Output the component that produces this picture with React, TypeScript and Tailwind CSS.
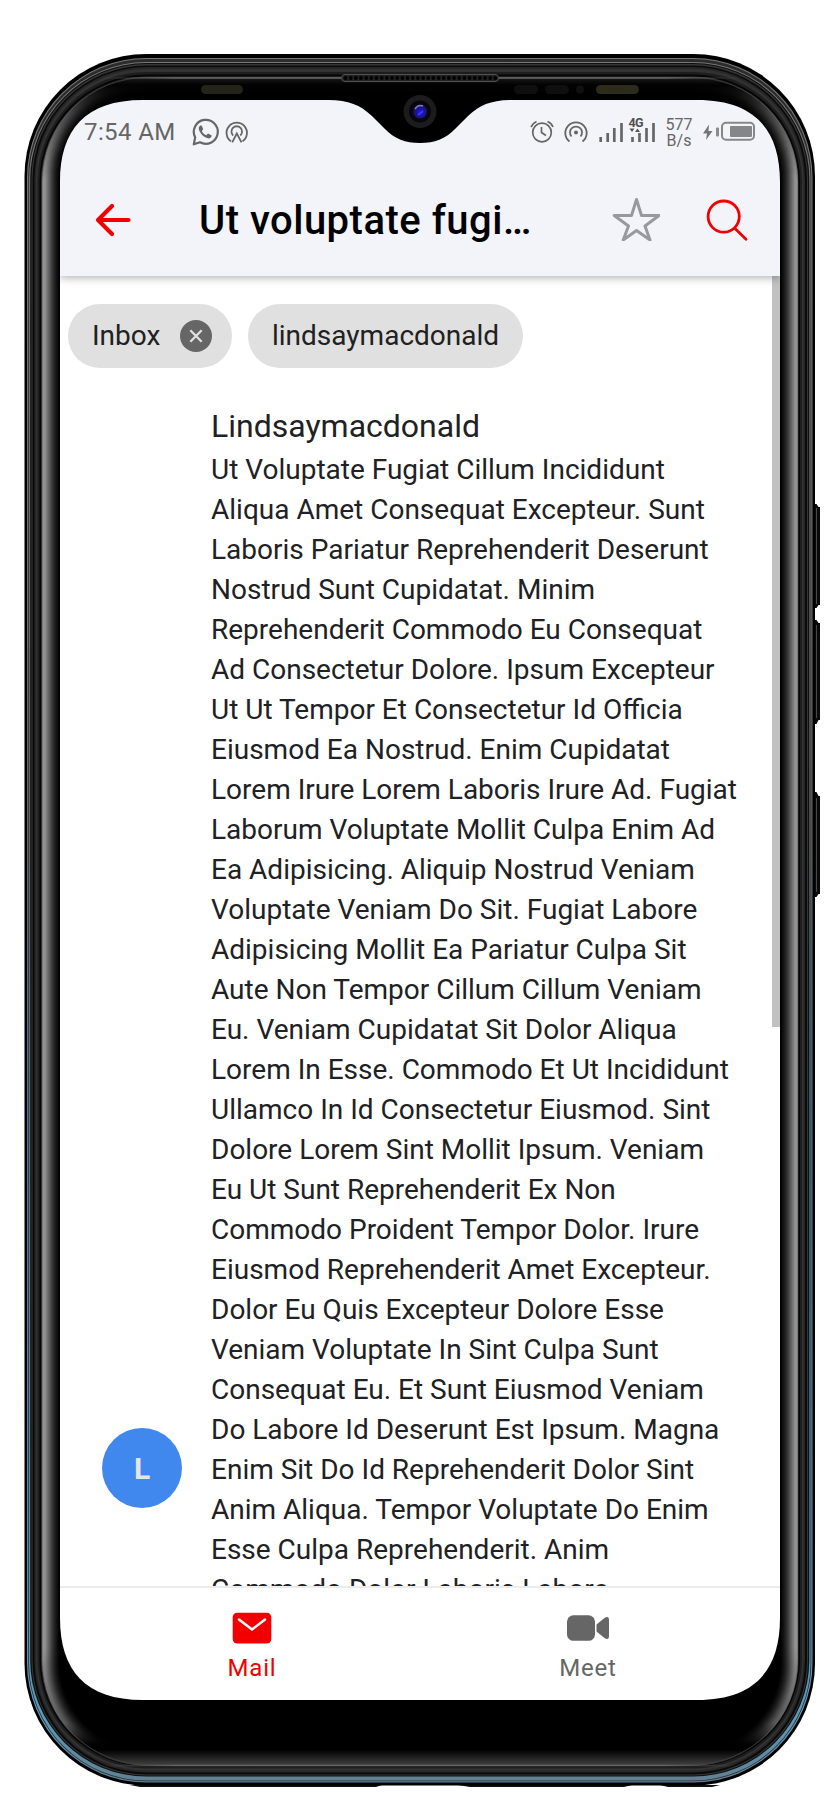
const bodyLines = [
  "Ut Voluptate Fugiat Cillum Incididunt",
  "Aliqua Amet Consequat Excepteur. Sunt",
  "Laboris Pariatur Reprehenderit Deserunt",
  "Nostrud Sunt Cupidatat. Minim",
  "Reprehenderit Commodo Eu Consequat",
  "Ad Consectetur Dolore. Ipsum Excepteur",
  "Ut Ut Tempor Et Consectetur Id Officia",
  "Eiusmod Ea Nostrud. Enim Cupidatat",
  "Lorem Irure Lorem Laboris Irure Ad. Fugiat",
  "Laborum Voluptate Mollit Culpa Enim Ad",
  "Ea Adipisicing. Aliquip Nostrud Veniam",
  "Voluptate Veniam Do Sit. Fugiat Labore",
  "Adipisicing Mollit Ea Pariatur Culpa Sit",
  "Aute Non Tempor Cillum Cillum Veniam",
  "Eu. Veniam Cupidatat Sit Dolor Aliqua",
  "Lorem In Esse. Commodo Et Ut Incididunt",
  "Ullamco In Id Consectetur Eiusmod. Sint",
  "Dolore Lorem Sint Mollit Ipsum. Veniam",
  "Eu Ut Sunt Reprehenderit Ex Non",
  "Commodo Proident Tempor Dolor. Irure",
  "Eiusmod Reprehenderit Amet Excepteur.",
  "Dolor Eu Quis Excepteur Dolore Esse",
  "Veniam Voluptate In Sint Culpa Sunt",
  "Consequat Eu. Et Sunt Eiusmod Veniam",
  "Do Labore Id Deserunt Est Ipsum. Magna",
  "Enim Sit Do Id Reprehenderit Dolor Sint",
  "Anim Aliqua. Tempor Voluptate Do Enim",
  "Esse Culpa Reprehenderit. Anim",
  "Commodo Dolor Laboris Labore",
];

/* Outer metal rims, listed from the outside in: inset on the sides, top and bottom. */
const rims = [
  { s: 0, t: 0, b: 0, c: "#000" },
  { s: 2.5, t: 4, b: 3, c: "url(#rimLine)" },
  { s: 3.700, t: 5, b: 4.300, c: "#2c2c2c" },
  { s: 4.5, t: 8, b: 5, c: "url(#rimLine)" },
  { s: 5.700, t: 9, b: 9, c: "#101010" },
  { s: 7, t: 10, b: 10, c: "#363636" },
  { s: 8, t: 11.5, b: 11, c: "#0a0a0a" },
  { s: 10, t: 13, b: 13, c: "#262626" },
  { s: 11.5, t: 15, b: 15, c: "#323232" },
  { s: 13, t: 18, b: 17, c: "#1e1e1e" },
  { s: 15, t: 20.5, b: 19, c: "#050505" },
  { s: 16.5, t: 22.5, b: 20, c: "#333" },
];

const glow = [
  "#7a7a7a", "#939393", "#929292", "#8a8a8a", "#7e7e7e", "#727272", "#666", "#5a5a5a", "#4d4d4d",
  "#414141", "#363636", "#2b2b2b", "#222", "#1a1a1a", "#131313", "#0c0c0c", "#060606", "#000",
];

const holes = Array.from({ length: 30 }, (_, i) => 345.500 + i * 5.17);

function Frame() {
  return (
    <svg className="pointer-events-none absolute inset-0 z-20" width="840" height="1800" viewBox="0 0 840 1800" fill="none">
      <defs>
        <linearGradient id="rimLine" gradientUnits="userSpaceOnUse" x1="0" y1="54" x2="0" y2="1786">
          <stop offset="0" stopColor="#777" />
          <stop offset="0.45" stopColor="#666" />
          <stop offset="0.62" stopColor="#4f7890" />
          <stop offset="0.96" stopColor="#5c9abb" />
          <stop offset="1" stopColor="#607f90" />
        </linearGradient>
        <linearGradient id="fade" gradientUnits="userSpaceOnUse" x1="0" y1="77" x2="0" y2="1765">
          <stop offset="0.004" stopColor="#000" />
          <stop offset="0.022" stopColor="#777" />
          <stop offset="0.06" stopColor="#fff" />
          <stop offset="0.93" stopColor="#fff" />
          <stop offset="0.975" stopColor="#999" />
          <stop offset="0.988" stopColor="#000" />
        </linearGradient>
        <linearGradient id="glass" gradientUnits="userSpaceOnUse" x1="0" y1="77" x2="0" y2="1765">
          <stop offset="0" stopColor="#1c1c1c" />
          <stop offset="0.005" stopColor="#000" />
          <stop offset="0.991" stopColor="#000" />
          <stop offset="1" stopColor="#404040" />
        </linearGradient>
        <linearGradient id="lip" gradientUnits="userSpaceOnUse" x1="100" y1="0" x2="740" y2="0">
          <stop offset="0" stopColor="#666" stopOpacity="0" />
          <stop offset="0.12" stopColor="#666" />
          <stop offset="0.88" stopColor="#666" />
          <stop offset="1" stopColor="#666" stopOpacity="0" />
        </linearGradient>
        <radialGradient id="lens" cx="0.55" cy="0.55" r="0.6">
          <stop offset="0" stopColor="#2018d8" />
          <stop offset="0.6" stopColor="#1b148e" />
          <stop offset="1" stopColor="#171040" />
        </radialGradient>
        <mask id="glowMask" maskUnits="userSpaceOnUse" x="0" y="0" width="840" height="1800">
          <rect width="840" height="1800" fill="url(#fade)" />
        </mask>
        <mask id="display" maskUnits="userSpaceOnUse" x="0" y="0" width="840" height="1800">
          <rect width="840" height="1800" fill="#fff" />
          <path
            fill="#000"
            d="M60 182C60 130 85 100 143 100H328C349 100 360 105 372 116L385 129C395 139 405 143 420 143C435 143 445 139 455 129L468 116C480 105 491 100 512 100H697C755 100 780 130 780 182V1618C780 1670 755 1700 697 1700H143C85 1700 60 1670 60 1618Z"
          />
        </mask>
      </defs>
      <g mask="url(#display)">
        <path d="M814 504h2.500l2 3h1.500v98h-1.500l-2 3h-2.500zM814 620l2.500 0l2 3h1.500v97h-1.500l-2 4h-2.500zM814 792h2.500l2 4h1.500v98h-1.500l-2 3h-2.500z" fill="#0a0a0a" />
        <path d="M816.500 508v96M816.500 625v93M816.500 798v94" stroke="#4a4a4a" />
        <path d="M130 1785H382L376 1787H140ZM458 1785H632L624 1787H470ZM660 1785H720L712 1787H668Z" fill="#111" />
        {rims.map((r, i) => (
          <rect
            key={i}
            x={24.5 + r.s}
            y={54 + r.t}
            width={790.5 - r.s * 2}
            height={1731.500 - r.t - r.b}
            rx={122 - r.s}
            ry={122 - r.s}
            fill={r.c}
          />
        ))}
        <rect x="42" y="77" width="756" height="1688.500" rx="104" fill="url(#glass)" />
        <rect x="42.500" y="77.500" width="755" height="1687" rx="104" stroke="#3d3d3d" />
        <path d="M100 78H740M100 1765.500H740" stroke="url(#lip)" strokeWidth="1.500" />
        <g mask="url(#glowMask)">
          {glow.map((c, i) => (
            <rect key={i} x={42 + i} y={77 + i * 0.9} width={756 - i * 2} height={1688 - i * 1.8} rx={104 - i} fill={c} />
          ))}
        </g>
        <rect x="341.500" y="74.500" width="157" height="7" rx="3.500" fill="#222" stroke="#505050" />
        {holes.map((x) => (
          <circle key={x} cx={x} cy="78" r="1.900" fill="#000" />
        ))}
        <rect x="201" y="85" width="42" height="9" rx="4.500" fill="#25241a" />
        <rect x="596" y="85" width="43" height="9" rx="4.500" fill="#2c2b1c" />
        <rect x="514" y="85" width="24" height="9" rx="4.500" fill="#0f0f0f" />
        <rect x="545" y="85" width="24" height="9" rx="4.500" fill="#0f0f0f" />
        <circle cx="580" cy="89.500" r="4" fill="#111" />
        <circle cx="420" cy="111.500" r="16.500" fill="#1c1c1f" />
        <circle cx="420" cy="111.500" r="11" fill="#08080a" />
        <circle cx="420" cy="111.500" r="7" fill="url(#lens)" />
        <path d="M415 109q3-5 8-3" stroke="#8177c9" strokeWidth="1.500" />
        <path d="M418 115l5-4" stroke="#3d38ff" strokeWidth="2" />
      </g>
    </svg>
  );
}

function StatusBar() {
  return (
    <div className="flex h-[66px] items-center pl-6 text-[#666]">
      <span className="mb-[2px] w-[106px] text-[24px] tracking-[0.4px] whitespace-nowrap">7:54 AM</span>
      <svg className="mb-[2px]" width="60" height="32" viewBox="190 116 60 32" fill="none" stroke="#666">
        <path d="M193.800 144.300L195.200 137.400A12 12 0 1 1 200 142.300Z" strokeWidth="2.200" strokeLinejoin="round" />
        <path d="M200.500 125.500c-2.200 1-2.200 3.500-.8 6 2 3.600 4.500 5.900 8 6.800 2.200.5 3.800-.7 4-2.800l-3.700-1.900-1.700 1.700c-2.200-.9-3.500-2.300-4.500-4.300l1.400-1.800-1.500-3.700z" fill="#666" stroke="none" />
        <path d="M231 141.300A10.200 10.200 0 1 1 242.500 141.300M233.200 135.500A5.300 5.300 0 1 1 240.300 135.500" strokeWidth="1.800" />
        <path d="M232.200 142.300L236.800 133.500L241.500 142.300" strokeWidth="1.800" />
      </svg>
      <svg className="ml-[276px]" width="136" height="34" viewBox="526 116 136 34" fill="none" stroke="#666">
        <circle cx="542" cy="132.500" r="9.300" strokeWidth="1.700" />
        <path d="M541.500 127v5.500l4.500 3M531 127q2-4 5.500-5.500M547.500 121.500q4 1.500 5.500 5.500" strokeWidth="1.700" />
        <path d="M569.500 141.500A10.700 10.700 0 1 1 582.500 141.500M571.500 136.500A6 6 0 1 1 580.500 136.500" strokeWidth="1.800" />
        <circle cx="576" cy="132.500" r="2" fill="#666" stroke="none" />
        <path d="M600.700 137v5M607.700 133v9M614.300 128v14M621.500 123v19M632.500 137v5M639.500 133v9M646.500 128v14M653.500 123v19" strokeWidth="2.700" />
        <path d="M629.500 128.500h5l-2.500 3.500zM635 132h5l-2.500-3.500z" fill="#555" stroke="none" />
        <text x="628.500" y="127" fill="#4f4f4f" stroke="none" fontFamily="Roboto, sans-serif" fontSize="12.500" fontWeight="700" textLength="15">4G</text>
      </svg>
      <div className="ml-[3px] flex w-[28px] flex-col items-center text-[16px] leading-[16px] whitespace-nowrap">
        <span>577</span>
        <span>B/s</span>
      </div>
      <svg className="mb-[2px] ml-[9px]" width="54" height="24" viewBox="702 120 54 24" fill="none">
        <path d="M709 124.500l-6 9h4l-1 6.500 6.500-9h-4z" fill="#747576" />
        <rect x="716" y="127.500" width="3" height="9" rx="1" fill="#8a8b8d" />
        <rect x="722" y="122.800" width="32" height="17" rx="4" stroke="#85868a" strokeWidth="2" />
        <rect x="730" y="126" width="22" height="11" rx="1" fill="#85868a" />
      </svg>
    </div>
  );
}

function TitleBar() {
  return (
    <div className="flex h-[110px] items-center pl-[34px]">
      <svg className="mb-[2px]" width="38" height="36" viewBox="94 202 38 36" fill="none" stroke="#f20000" strokeWidth="4.200" strokeLinecap="round" strokeLinejoin="round">
        <path d="M128.500 220H98M112 206L98 220L112 234" />
      </svg>
      <h1 className="ml-[67px] w-[413px] text-[40px] leading-[48px] font-medium tracking-[0.5px] whitespace-nowrap text-black">Ut voluptate fugi…</h1>
      <svg className="mb-[4px]" width="48" height="44" viewBox="612 197 48 44" fill="none" stroke="#96999e" strokeWidth="3" strokeLinejoin="round">
        <path d="M636.500 199.500L641.500 215.500L659 215.500L645 226L650 240L636.500 230.500L623.200 240L628.500 226L614.200 215.500L631.500 215.500Z" />
      </svg>
      <svg className="mb-[3px] ml-[45px]" width="44" height="44" viewBox="705 198 44 44" fill="none" stroke="#f20000" strokeWidth="2.800" strokeLinecap="round">
        <circle cx="723.700" cy="216.600" r="15.600" />
        <path d="M735 228.500L746 239.200" />
      </svg>
    </div>
  );
}

export default function App() {
  return (
    <div className="relative h-[1800px] w-[840px] overflow-hidden bg-white px-[60px] pt-[100px] font-[Roboto,sans-serif]">
      <div className="flex h-[1600px] w-[720px] flex-col overflow-hidden rounded-[60px] bg-white">
        <header className="z-10 h-[176px] shrink-0 bg-[#f3f4f9] shadow-[0_2px_8px_rgba(0,0,0,0.3)]">
          <StatusBar />
          <TitleBar />
        </header>

        <main className="flex min-h-0 flex-1 justify-between overflow-hidden">
          <div className="w-[690px]">
            <div className="flex gap-4 pt-7 pl-2 text-[28px] text-[#212121]">
              <div className="flex h-16 w-[164px] items-center justify-between rounded-full bg-[#e0e0e0] pr-5 pl-6">
                <span>Inbox</span>
                <svg width="32" height="32" viewBox="0 0 32 32">
                  <circle cx="16" cy="16" r="16" fill="#666" />
                  <path d="M10.300 10.300L21.700 21.700M21.700 10.300L10.300 21.700" stroke="#e0e0e0" strokeWidth="2.300" />
                </svg>
              </div>
              <div className="flex h-16 w-[275px] items-center rounded-full bg-[#e0e0e0] pl-6">lindsaymacdonald</div>
            </div>
            <div className="flex pt-9 text-[#202124]">
              <div className="mt-[1024px] ml-[42px] flex size-20 shrink-0 items-center justify-center rounded-full bg-[#4087ee] text-[30px] font-bold text-[#e3e5e8]">L</div>
              <div className="ml-[29px] whitespace-nowrap">
                <h2 className="h-[46px] text-[32px] leading-[44px]">Lindsaymacdonald</h2>
                <div className="text-[28px] leading-[40px]">
                  {bodyLines.map((line) => (
                    <p key={line}>{line}</p>
                  ))}
                </div>
              </div>
            </div>
          </div>
          <div className="h-[751px] w-2 bg-[#c1c1c1]" />
        </main>

        <nav className="flex h-[114px] shrink-0 border-t-2 border-[#ececec] bg-white text-[24px] leading-[32px] tracking-[0.8px]">
          <div className="ml-[24px] flex w-[336px] flex-col items-center pt-6 text-[#f20000]">
            <svg width="40" height="32" viewBox="0 0 40 32" fill="none">
              <rect x="0.700" y="0.700" width="38.600" height="30.800" rx="4.500" fill="#f20000" />
              <path d="M7 7.500L20 17.500L33 7.500" stroke="#fff" strokeWidth="2.500" strokeLinecap="round" />
            </svg>
            <span className="mt-2">Mail</span>
          </div>
          <div className="flex w-[336px] flex-col items-center pt-6 text-[#666]">
            <svg width="44" height="32" viewBox="0 0 44 32" fill="#666">
              <rect x="1" y="3.300" width="28" height="25.500" rx="6.500" />
              <path d="M30.500 12.500L38.500 6Q43 3.500 43 8V24Q43 28.500 38.500 26L30.500 19.500Z" />
            </svg>
            <span className="mt-2">Meet</span>
          </div>
        </nav>
      </div>
      <Frame />
    </div>
  );
}
